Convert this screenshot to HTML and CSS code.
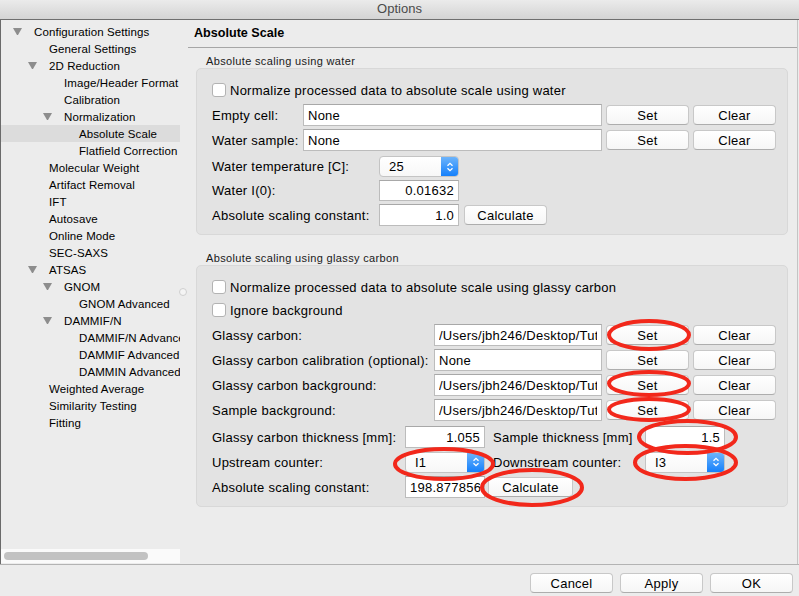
FILE: index.html
```html
<!DOCTYPE html>
<html lang="en">
<head>
  <meta charset="UTF-8" />
  <title>Options</title>
  <link rel="stylesheet" href="styles.css">
</head>
<body>
  <div class="window">

    <div class="titlebar">Options</div>

    <div class="main">
      <!-- Settings tree -->
      <div class="tree">
        <ul class="tree-list">
          <li class="node lvl0 open"><span class="arrow"></span>Configuration Settings</li>
          <li class="node lvl1"><span class="arrow"></span>General Settings</li>
          <li class="node lvl1 open"><span class="arrow"></span>2D Reduction</li>
          <li class="node lvl2"><span class="arrow"></span>Image/Header Format</li>
          <li class="node lvl2"><span class="arrow"></span>Calibration</li>
          <li class="node lvl2 open"><span class="arrow"></span>Normalization</li>
          <li class="node lvl3 selected"><span class="arrow"></span>Absolute Scale</li>
          <li class="node lvl3"><span class="arrow"></span>Flatfield Correction</li>
          <li class="node lvl1"><span class="arrow"></span>Molecular Weight</li>
          <li class="node lvl1"><span class="arrow"></span>Artifact Removal</li>
          <li class="node lvl1"><span class="arrow"></span>IFT</li>
          <li class="node lvl1"><span class="arrow"></span>Autosave</li>
          <li class="node lvl1"><span class="arrow"></span>Online Mode</li>
          <li class="node lvl1"><span class="arrow"></span>SEC-SAXS</li>
          <li class="node lvl1 open"><span class="arrow"></span>ATSAS</li>
          <li class="node lvl2 open"><span class="arrow"></span>GNOM</li>
          <li class="node lvl3"><span class="arrow"></span>GNOM Advanced</li>
          <li class="node lvl2 open"><span class="arrow"></span>DAMMIF/N</li>
          <li class="node lvl3"><span class="arrow"></span>DAMMIF/N Advanced</li>
          <li class="node lvl3"><span class="arrow"></span>DAMMIF Advanced</li>
          <li class="node lvl3"><span class="arrow"></span>DAMMIN Advanced</li>
          <li class="node lvl1"><span class="arrow"></span>Weighted Average</li>
          <li class="node lvl1"><span class="arrow"></span>Similarity Testing</li>
          <li class="node lvl1"><span class="arrow"></span>Fitting</li>
        </ul>
        <div class="hscroll"><div class="hthumb"></div></div>
      </div>

      <div class="splitter"><span class="grip"></span></div>

      <!-- Settings page -->
      <div class="page">
        <div class="page-title">Absolute Scale</div>

        <div class="group-label">Absolute scaling using water</div>
        <div class="group">
          <label class="check-row"><span class="check"></span>Normalize processed data to absolute scale using water</label>
          <div class="row">
            <span class="label w91">Empty cell:</span>
            <input class="field water-file" value="None">
            <button class="btn btn-file">Set</button>
            <button class="btn btn-file">Clear</button>
          </div>
          <div class="row">
            <span class="label w91">Water sample:</span>
            <input class="field water-file" value="None">
            <button class="btn btn-file">Set</button>
            <button class="btn btn-file">Clear</button>
          </div>
          <div class="row short spin-row">
            <span class="label w167">Water temperature [C]:</span>
            <div class="combo"><span class="combo-text">25</span><span class="stepper"><svg width="8" height="12" viewBox="0 0 8 12"><path d="M1.5 4.8 L4 2.3 L6.5 4.8 M1.5 7.2 L4 9.7 L6.5 7.2" fill="none" stroke="#fff" stroke-width="1.3"/></svg></span></div>
          </div>
          <div class="row short">
            <span class="label w167">Water I(0):</span>
            <input class="field num short" value="0.01632">
          </div>
          <div class="row">
            <span class="label w167">Absolute scaling constant:</span>
            <input class="field num" value="1.0">
            <button class="btn btn-calc">Calculate</button>
          </div>
        </div>

        <div class="group-label second">Absolute scaling using glassy carbon</div>
        <div class="group">
          <label class="check-row first"><span class="check"></span>Normalize processed data to absolute scale using glassy carbon</label>
          <label class="check-row last"><span class="check"></span>Ignore background</label>
          <div class="row">
            <span class="label w222">Glassy carbon:</span>
            <input class="field gc-file" value="/Users/jbh246/Desktop/Tutorial_Data/gc">
            <button class="btn btn-file">Set</button>
            <button class="btn btn-file">Clear</button>
          </div>
          <div class="row">
            <span class="label w222">Glassy carbon calibration (optional):</span>
            <input class="field gc-file" value="None">
            <button class="btn btn-file">Set</button>
            <button class="btn btn-file">Clear</button>
          </div>
          <div class="row">
            <span class="label w222">Glassy carbon background:</span>
            <input class="field gc-file" value="/Users/jbh246/Desktop/Tutorial_Data/bg">
            <button class="btn btn-file">Set</button>
            <button class="btn btn-file">Clear</button>
          </div>
          <div class="row">
            <span class="label w222">Sample background:</span>
            <input class="field gc-file" value="/Users/jbh246/Desktop/Tutorial_Data/sb">
            <button class="btn btn-file">Set</button>
            <button class="btn btn-file">Clear</button>
          </div>
          <div class="row spaced">
            <span class="label w193">Glassy carbon thickness [mm]:</span>
            <input class="field num" value="1.055">
            <span class="label w152 pad">Sample thickness [mm]</span>
            <input class="field num" value="1.5">
          </div>
          <div class="row">
            <span class="label w193">Upstream counter:</span>
            <div class="combo"><span class="combo-text">I1</span><span class="stepper"><svg width="8" height="12" viewBox="0 0 8 12"><path d="M1.5 4.8 L4 2.3 L6.5 4.8 M1.5 7.2 L4 9.7 L6.5 7.2" fill="none" stroke="#fff" stroke-width="1.3"/></svg></span></div>
            <span class="label w152 pad">Downstream counter:</span>
            <div class="combo"><span class="combo-text">I3</span><span class="stepper"><svg width="8" height="12" viewBox="0 0 8 12"><path d="M1.5 4.8 L4 2.3 L6.5 4.8 M1.5 7.2 L4 9.7 L6.5 7.2" fill="none" stroke="#fff" stroke-width="1.3"/></svg></span></div>
          </div>
          <div class="row">
            <span class="label w193">Absolute scaling constant:</span>
            <input class="field num long" value="198.8778564">
            <button class="btn btn-calc2">Calculate</button>
          </div>
        </div>
      </div>
    </div>

    <div class="footer">
      <button class="btn btn-footer">Cancel</button>
      <button class="btn btn-footer">Apply</button>
      <button class="btn btn-footer">OK</button>
    </div>

    <!-- red annotation marks drawn over the dialog -->
    <svg class="marks" width="799" height="596" viewBox="0 0 799 596">
      <g fill="none" stroke="#f2281b" stroke-width="4">
        <ellipse cx="649" cy="335" rx="40" ry="14"/>
        <ellipse cx="649" cy="383.5" rx="40" ry="11.5"/>
        <ellipse cx="649" cy="409.5" rx="40" ry="10.5"/>
        <ellipse cx="687.5" cy="437" rx="48.5" ry="16"/>
        <ellipse cx="685.5" cy="462.5" rx="50.5" ry="16.5"/>
        <ellipse cx="444" cy="464" rx="49" ry="15"/>
        <ellipse cx="532" cy="487.5" rx="50" ry="17.5"/>
      </g>
    </svg>

  </div>
</body>
</html>
```

FILE: styles.css
```css
* {
  box-sizing: border-box;
}

body {
  margin: 0;
  background: #ececec;
  font-family: 'Liberation Sans', Arial, sans-serif;
  font-size: 13px;
  color: #000;
}

.window {
  position: relative;
  width: 799px;
  height: 596px;
  display: flex;
  flex-direction: column;
  overflow: hidden;
}

.titlebar {
  height: 20px;
  line-height: 18px;
  text-align: center;
  font-size: 13px;
  color: #4a4a4a;
  background: linear-gradient(#ebebeb, #d4d4d4);
  border-bottom: 1px solid #6f6f6f;
}

.main {
  flex: 1;
  display: flex;
  min-height: 0;
}

/* Tree */
.tree {
  width: 180px;
  border-left: 1px solid #6a6a6a;
  display: flex;
  flex-direction: column;
}

.tree-list {
  flex: 1;
  list-style: none;
  margin: 0;
  padding: 3px 0 0;
  overflow: hidden;
}

.node {
  height: 17px;
  display: flex;
  align-items: center;
  white-space: nowrap;
  font-size: 11.5px;
  letter-spacing: 0.1px;
  color: #000;
}

.node.lvl0 { padding-left: 12px; }
.node.lvl1 { padding-left: 27px; }
.node.lvl2 { padding-left: 42px; }
.node.lvl3 { padding-left: 57px; }

.arrow {
  flex: none;
  width: 9px;
  height: 7px;
  margin-right: 12px;
}

.open .arrow {
  border-left: 4.5px solid transparent;
  border-right: 4.5px solid transparent;
  border-top: 7px solid #8d8d8d;
}

.node.selected {
  background: #dcdcdc;
}

.hscroll {
  height: 14px;
  margin-bottom: 1px;
  background: #fafafa;
  padding: 3px;
}

.hthumb {
  width: 144px;
  height: 8px;
  border-radius: 4px;
  background: #c2c2c2;
}

/* Splitter */
.splitter {
  width: 8px;
  position: relative;
}

.grip {
  position: absolute;
  top: 268px;
  left: -1px;
  width: 8px;
  height: 8px;
  border-radius: 50%;
  background: #f4f4f4;
  border: 1px solid #cfcfcf;
}

/* Page */
.page {
  flex: 1;
  margin-right: 1px;
  border-right: 1px solid #c4c4c4;
}

.page-title {
  height: 28px;
  line-height: 27px;
  padding-left: 6px;
  font-weight: bold;
  font-size: 12.6px;
  color: #000;
  border-bottom: 1px solid #a6a6a6;
}

.group-label {
  margin: 7px 0 0 18px;
  height: 13px;
  line-height: 13px;
  font-size: 11px;
  letter-spacing: 0.35px;
  color: #1a1a1a;
}

.group-label.second {
  margin-top: 17px;
}

.group {
  margin: 0 9px 0 8px;
  background: #e3e3e3;
  border: 1px solid #d8d8d8;
  border-radius: 5px;
  padding: 13px 0 8px 15px;
  display: flex;
  flex-direction: column;
  gap: 3px;
}

.check-row {
  height: 16px;
  display: flex;
  align-items: center;
  margin-bottom: 3px;
  letter-spacing: 0.25px;
}

.check-row.first { margin-bottom: 4px; }
.check-row.last { margin-bottom: 3px; }

.check {
  width: 14px;
  height: 14px;
  margin-right: 4px;
  background: #fff;
  border: 1px solid #b3b3b3;
  border-radius: 3px;
}

.row {
  height: 22px;
  display: flex;
  align-items: center;
}

.row.short {
  height: 21px;
}

.row.spin-row {
  margin-top: 2px;
}

.row.spaced {
  margin-top: 2px;
}

.label {
  flex: none;
  white-space: nowrap;
  letter-spacing: 0.25px;
}

.w91 { width: 91px; }
.w167 { width: 167px; }
.w193 { width: 193px; }
.w222 { width: 222px; }
.w152 { width: 152px; }
.label.pad { margin-left: 8px; }

.field {
  height: 22px;
  padding: 0 4px;
  background: #fff;
  border: 1px solid #bcbcbc;
  border-top-color: #a8a8a8;
  border-radius: 0;
  font: inherit;
  letter-spacing: 0.25px;
  color: #000;
  outline: none;
}

.field.short {
  height: 21px;
}

.water-file { width: 299px; }
.gc-file { width: 168px; }

.field.num {
  width: 80px;
  text-align: right;
}

.field.num.long {
  text-align: left;
}

.combo {
  width: 80px;
  height: 21px;
  display: flex;
  align-items: center;
  background: linear-gradient(#ffffff, #f7f7f7);
  border: 1px solid #c4c4c4;
  border-radius: 4px;
  overflow: hidden;
}

.combo-text {
  flex: 1;
  padding-left: 9px;
  letter-spacing: 0.25px;
}

.stepper {
  width: 17px;
  height: 100%;
  display: flex;
  align-items: center;
  justify-content: center;
  background: linear-gradient(#6db4fb, #1580fb);
}

.btn {
  height: 20px;
  padding: 0;
  font: inherit;
  letter-spacing: 0.25px;
  color: #000;
  background: linear-gradient(#ffffff, #f6f6f6);
  border: 1px solid #c8c8c8;
  border-bottom-color: #adadad;
  border-radius: 4px;
}

.btn-file {
  width: 83px;
  margin-left: 4px;
}

.btn-calc {
  width: 83px;
  margin-left: 5px;
}

.btn-calc2 {
  width: 85px;
  margin-left: 3px;
}

/* Footer */
.footer {
  height: 32px;
  border-top: 1px solid #b3b3b3;
  display: flex;
  justify-content: flex-end;
  gap: 7px;
  padding: 8px 6px 0 0;
}

.btn-footer {
  width: 83px;
}

.marks {
  position: absolute;
  top: 0;
  left: 0;
  pointer-events: none;
}
```
